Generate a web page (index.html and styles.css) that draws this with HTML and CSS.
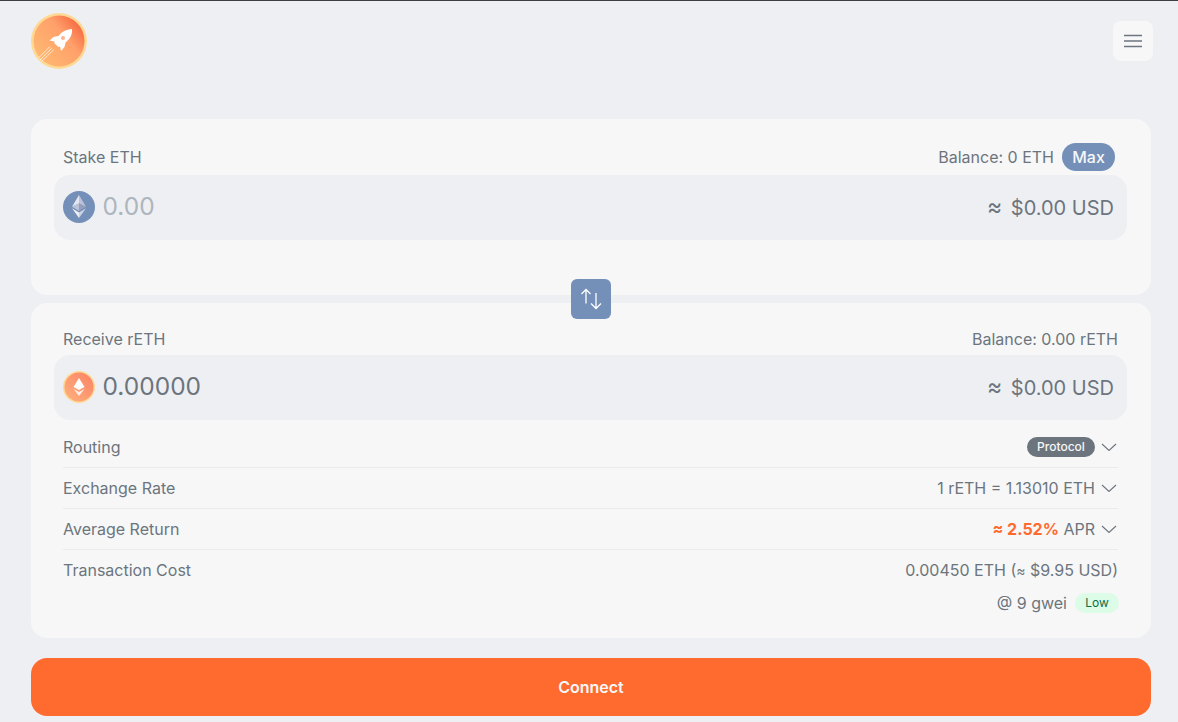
FILE: index.html
```html
<!DOCTYPE html>
<html lang="en">
<head>
    <meta charset="UTF-8">
    <meta name="viewport" content="width=device-width, initial-scale=1.0">
    <title>Stake ETH</title>
    <link rel="stylesheet" href="styles.css">
</head>
<body>
    <header class="header">
        <svg class="logo" viewBox="0 0 56 56" role="img" aria-label="Rocket logo">
            <defs>
                <linearGradient id="logo-fill" x1="0.1" y1="0.75" x2="0.9" y2="0.1">
                    <stop offset="0" stop-color="#ffb671"/>
                    <stop offset="0.6" stop-color="#ffa06a"/>
                    <stop offset="1" stop-color="#f6653f"/>
                </linearGradient>
            </defs>
            <circle cx="28" cy="28" r="28" fill="#ffd993"/>
            <circle cx="28" cy="28" r="25.500" fill="url(#logo-fill)"/>
            <path d="M41 16 C35 16.500 31 18.500 27.500 23 L22.500 24 L18.500 27.500 L23.500 28.500 L23.500 30.500 L27.500 34 L29 33.500 L30 38 L33.500 34 L34.500 29.500 C39 26 41.500 22 41 16 Z" fill="#fff"/>
            <circle cx="32" cy="25" r="2" fill="#ffb48a"/>
            <path d="M21 35 L9 47 M23 36.500 L11 48 M19 33.500 L8 44.500" stroke="#ffe9d2" stroke-width="1" fill="none"/>
        </svg>
        <button class="menu-button" aria-label="Menu">
            <svg viewBox="0 0 18 14" width="18" height="14">
                <path d="M0 1.500H18M0 7H18M0 12.500H18" stroke="#6c757d" stroke-width="1.300"/>
            </svg>
        </button>
    </header>

    <main class="swap">
        <section class="card card-stake">
            <div class="label-row">
                <span>Stake ETH</span>
                <div class="balance">
                    <span>Balance: 0 ETH</span>
                    <button class="max-button">Max</button>
                </div>
            </div>
            <div class="amount-box">
                <svg class="token" viewBox="0 0 32 32">
                    <circle cx="16" cy="16" r="16" fill="#7490b8"/>
                    <path d="M16 4 L9 15.800 L16 12.500 Z" fill="#e4e6f0"/>
                    <path d="M16 4 L23 15.800 L16 12.500 Z" fill="#bcc3d8"/>
                    <path d="M16 12.500 L9 15.800 L16 20 Z" fill="#bcc3d8"/>
                    <path d="M16 12.500 L23 15.800 L16 20 Z" fill="#959fbd"/>
                    <path d="M9 17.300 L16 21.500 L16 27 Z" fill="#eef0f6"/>
                    <path d="M23 17.300 L16 21.500 L16 27 Z" fill="#cfd4e3"/>
                </svg>
                <span class="amount amount-empty">0.00</span>
                <span class="usd"><span class="approx">≈</span> $0.00 USD</span>
            </div>
        </section>

        <button class="swap-button" aria-label="Switch">
            <svg viewBox="0 0 22 22" width="22" height="22">
                <path d="M6 15.500V1.500M1.500 6L6 1.500L10.500 6M16 5V20.500M11 15.500L16 20.500L21 15.500" stroke="#fff" stroke-width="1.300" fill="none"/>
            </svg>
        </button>

        <section class="card card-receive">
            <div class="label-row">
                <span>Receive rETH</span>
                <span>Balance: 0.00 rETH</span>
            </div>
            <div class="amount-box">
                <svg class="token" viewBox="0 0 32 32">
                    <defs>
                        <linearGradient id="reth-fill" x1="0" y1="1" x2="1" y2="0">
                            <stop offset="0" stop-color="#ffb27e"/>
                            <stop offset="1" stop-color="#fb8165"/>
                        </linearGradient>
                    </defs>
                    <circle cx="16" cy="16" r="16" fill="#ffd993"/>
                    <circle cx="16" cy="16" r="14.500" fill="url(#reth-fill)"/>
                    <path d="M16 7 L10.500 16 L16 19 L21.500 16 Z" fill="#fff"/>
                    <path d="M10.500 18 L16 21 L21.500 18 L16 25 Z" fill="#ffeee6"/>
                </svg>
                <span class="amount">0.00000</span>
                <span class="usd"><span class="approx">≈</span> $0.00 USD</span>
            </div>
            <div class="info-row">
                <span>Routing</span>
                <span class="info-value">
                    <span class="badge badge-protocol">Protocol</span>
                    <svg class="chevron" viewBox="0 0 16 8"><path d="M1 1L8 7.500L15 1" /></svg>
                </span>
            </div>
            <div class="info-row">
                <span>Exchange Rate</span>
                <span class="info-value">
                    1 rETH = 1.13010 ETH
                    <svg class="chevron" viewBox="0 0 16 8"><path d="M1 1L8 7.500L15 1" /></svg>
                </span>
            </div>
            <div class="info-row">
                <span>Average Return</span>
                <span class="info-value">
                    <span><strong class="apr">≈ 2.52%</strong> APR</span>
                    <svg class="chevron" viewBox="0 0 16 8"><path d="M1 1L8 7.500L15 1" /></svg>
                </span>
            </div>
            <div class="info-row info-row-last">
                <span>Transaction Cost</span>
                <span class="info-value">
                    <span>0.00450 ETH (<span class="approx-small">≈</span> $9.95 USD)</span>
                </span>
            </div>
            <div class="gas-row">
                <span>@ 9 gwei</span>
                <span class="badge badge-low">Low</span>
            </div>
        </section>

        <button class="connect-button">Connect</button>
    </main>
</body>
</html>
```

FILE: styles.css
```css
* {
    box-sizing: border-box;
}
body {
    margin: 0;
    height: 722px;
    overflow: hidden;
    font-family: Inter, "Liberation Sans", sans-serif;
    font-size: 16px;
    color: #6c757d;
    background-color: #eeeff3;
    border-top: 1px solid #3a3d42;
}
button {
    font-family: inherit;
    border: none;
    cursor: pointer;
}
.header {
    display: flex;
    align-items: flex-start;
    justify-content: space-between;
    height: 118px;
    padding: 12px 25px 0 31px;
}
.logo {
    width: 56px;
    height: 56px;
}
.menu-button {
    display: flex;
    align-items: center;
    justify-content: center;
    width: 40px;
    height: 40px;
    margin-top: 8px;
    padding: 0;
    background: #f7f7f8;
    border-radius: 8px;
}
.swap {
    position: relative;
    margin: 0 27px 0 31px;
}
.card {
    background: #f7f7f8;
    border-radius: 16px;
    padding: 24px 24px 0 23px;
}
.card-stake {
    height: 176px;
    margin-bottom: 8px;
}
.card-receive {
    height: 335px;
    margin-bottom: 20px;
    padding-top: 22px;
}
.label-row {
    display: flex;
    align-items: center;
    justify-content: space-between;
    height: 28px;
    margin-bottom: 4px;
    padding: 0 9px;
}
.card-receive .label-row {
    margin-bottom: 2px;
}
.card-stake .label-row {
    padding-right: 12px;
}
.balance {
    display: flex;
    align-items: center;
    gap: 8px;
}
.max-button {
    width: 53px;
    height: 28px;
    padding: 0;
    font-size: 16px;
    font-weight: 500;
    color: #f7f7f8;
    background: #7490b8;
    border-radius: 14px;
}
.amount-box {
    display: flex;
    align-items: center;
    height: 65px;
    padding: 0 13px 1px 9px;
    background: #eeeff3;
    border-radius: 16px;
}
.token {
    width: 32px;
    height: 32px;
    margin-right: 7.500px;
}
.amount {
    flex: 1;
    margin-bottom: 2px;
    font-size: 24.500px;
}
.amount-empty {
    color: #adb5bd;
}
.usd {
    margin-top: 2px;
    font-size: 20px;
}
.approx {
    margin-right: 3px;
    font-size: 23px;
    line-height: 1;
}
.approx-small {
    font-size: 14px;
}
.swap-button {
    position: absolute;
    left: 540px;
    top: 160px;
    display: flex;
    align-items: center;
    justify-content: center;
    width: 40px;
    height: 40px;
    padding: 0;
    background: #7490b8;
    border-radius: 6px;
}
.info-row {
    display: flex;
    align-items: center;
    justify-content: space-between;
    height: 41px;
    margin: 0 9px;
    border-bottom: 1px solid #e9ecef;
}
.amount-box + .info-row {
    margin-top: 7px;
}
.info-row-last {
    height: 40px;
    border-bottom: none;
}
.info-value {
    display: flex;
    align-items: center;
    gap: 6px;
}
.chevron {
    width: 16px;
    height: 8px;
    margin-right: 1px;
}
.chevron path {
    fill: none;
    stroke: #6c757d;
    stroke-width: 1.100;
}
.badge {
    display: inline-block;
    height: 20px;
    line-height: 20px;
    border-radius: 10px;
    font-size: 12px;
}
.badge-protocol {
    width: 68px;
    text-align: center;
    font-weight: 500;
    color: #f7f7f8;
    background: #6c757d;
}
.badge-low {
    width: 44px;
    text-align: center;
    color: #0f6b48;
    background: #dcfce7;
}
.apr {
    color: #ff6b2f;
    font-weight: 700;
}
.gas-row {
    display: flex;
    align-items: center;
    justify-content: flex-end;
    gap: 8px;
    margin: 3px 8px 0 0;
}
.connect-button {
    display: block;
    width: 100%;
    height: 58px;
    font-size: 16px;
    font-weight: 600;
    color: #f7f7f8;
    background: #ff6b2f;
    border-radius: 16px;
}
```
